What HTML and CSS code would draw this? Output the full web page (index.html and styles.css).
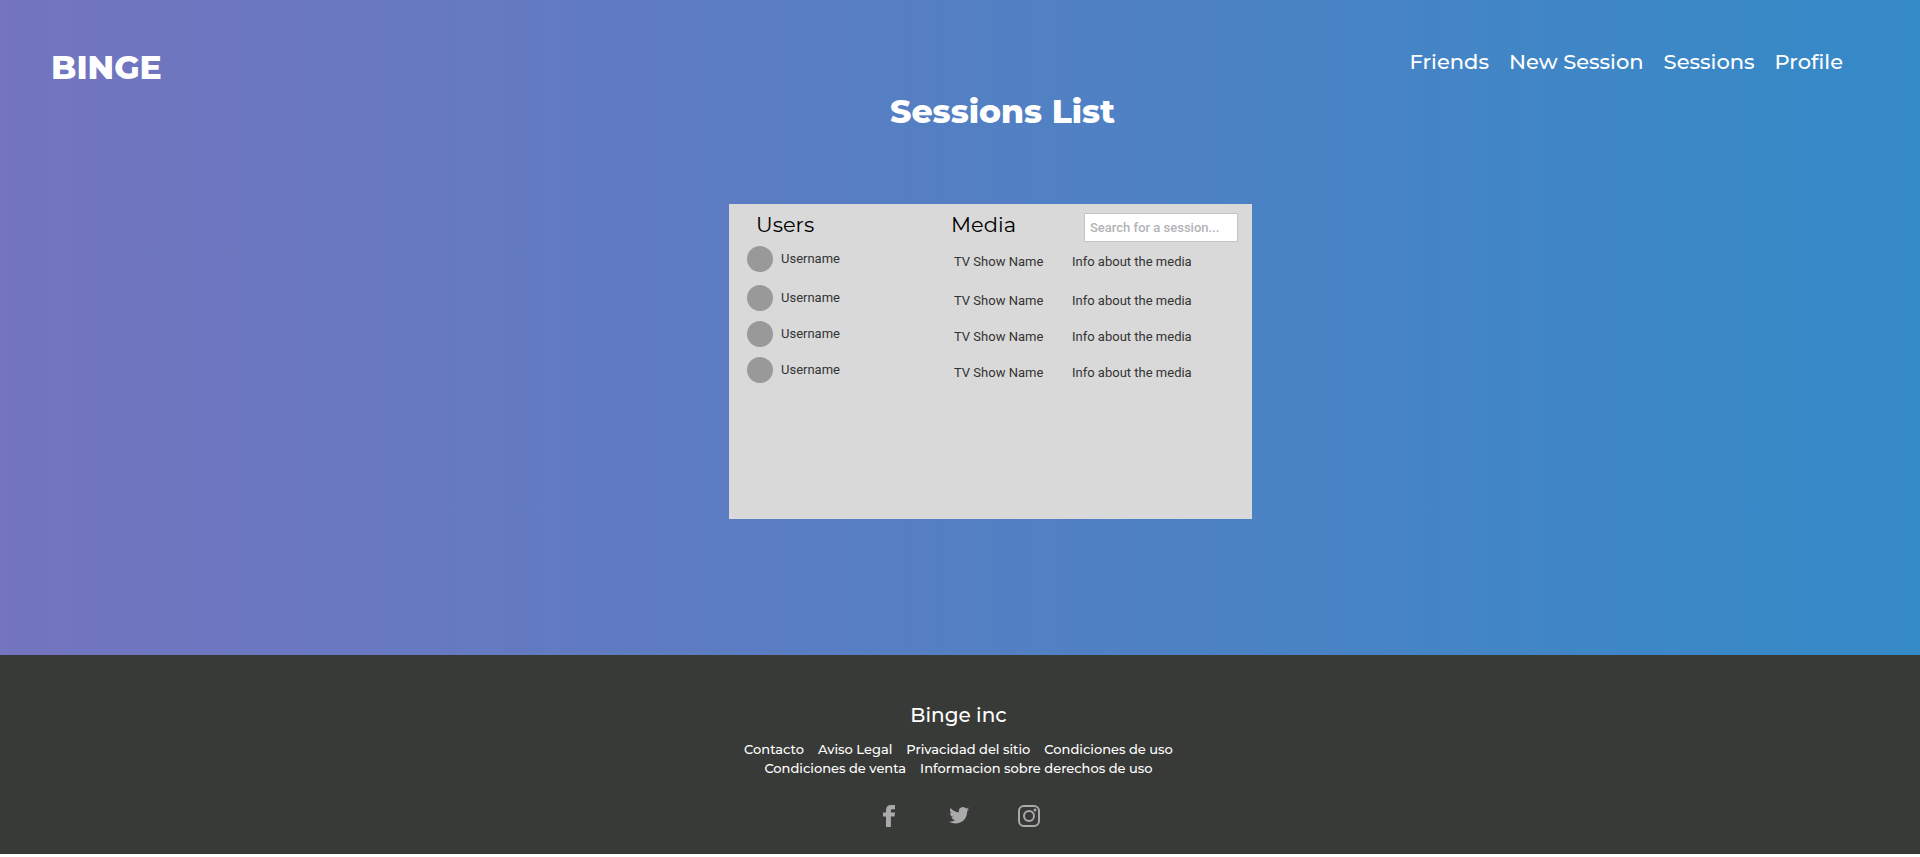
FILE: index.html
```html
<!DOCTYPE html>
<html lang="es">
<head>
<meta charset="utf-8">
<meta name="viewport" content="width=device-width, initial-scale=1">
<title>Binge - Sessions List</title>
<link rel="stylesheet" href="styles.css">
</head>
<body>
<div class="hero">
  <header class="topbar">
    <a class="brand" href="#">BINGE</a>
    <nav class="nav">
      <a href="#">Friends</a>
      <a href="#">New Session</a>
      <a href="#">Sessions</a>
      <a href="#">Profile</a>
    </nav>
  </header>
  <main class="content">
    <h1 class="title">Sessions List</h1>
    <section class="panel">
      <table class="sessions">
        <colgroup><col class="col-user"><col class="col-show"><col class="col-info"></colgroup>
        <thead>
          <tr>
            <th class="head-users" scope="col">Users</th>
            <th scope="col">Media</th>
            <td class="head-search"><input class="search" type="search" aria-label="Search for a session" placeholder="Search for a session..."></td>
          </tr>
        </thead>
        <tbody>
          <tr><td><div class="user"><span class="avatar"></span><span>Username</span></div></td><td class="media show">TV Show Name</td><td class="media">Info about the media</td></tr>
          <tr><td><div class="user"><span class="avatar"></span><span>Username</span></div></td><td class="media show">TV Show Name</td><td class="media">Info about the media</td></tr>
          <tr><td><div class="user"><span class="avatar"></span><span>Username</span></div></td><td class="media show">TV Show Name</td><td class="media">Info about the media</td></tr>
          <tr><td><div class="user"><span class="avatar"></span><span>Username</span></div></td><td class="media show">TV Show Name</td><td class="media">Info about the media</td></tr>
        </tbody>
      </table>
    </section>
  </main>
</div>
<footer class="footer">
  <h2 class="company">Binge inc</h2>
  <nav class="links">
    <a href="#">Contacto</a>
    <a href="#">Aviso Legal</a>
    <a href="#">Privacidad del sitio</a>
    <a href="#">Condiciones de uso</a>
    <a href="#">Condiciones de venta</a>
    <a href="#">Informacion sobre derechos de uso</a>
  </nav>
  <div class="social">
    <a href="#" aria-label="Facebook"><svg viewBox="0 0 24 24"><path fill="currentColor" d="M9 23V12.600H6V8.600h3V6.200C9 2.900 10.700 1 14 1h4v4.200h-2.600c-1.200 0-1.500.5-1.500 1.600v1.800H18l-.5 4h-3.600V23z"/></svg></a>
    <a href="#" aria-label="Twitter"><svg viewBox="0 0 24 24"><path fill="currentColor" d="M22.200 5.200c-.7.300-1.500.5-2.300.6.800-.5 1.500-1.300 1.800-2.200-.8.500-1.700.8-2.600 1A4.100 4.100 0 0 0 12 8.300C8.600 8.200 5.600 6.500 3.600 4c-1.100 1.900-.6 4.300 1.200 5.500-.6 0-1.300-.2-1.800-.5 0 2 1.400 3.700 3.300 4.100-.6.200-1.200.2-1.900.1.500 1.600 2 2.800 3.800 2.800A8.300 8.300 0 0 1 2.200 17.700c5.700 3.600 16.500 2 17.900-8.700V7.300c.8-.6 1.500-1.300 2.100-2.100z"/></svg></a>
    <a href="#" aria-label="Instagram"><svg viewBox="0 0 24 24"><g fill="none" stroke="currentColor" stroke-width="2"><rect x="2" y="2" width="20" height="20" rx="5"/><circle cx="12" cy="12" r="5"/></g><circle cx="18" cy="6" r="1.500" fill="currentColor"/></svg></a>
  </div>
</footer>
</body>
</html>
```
FILE: styles.css
```css
* { box-sizing: border-box; }

body {
  margin: 0;
  background: #fff;
  font-family: Montserrat, Inter, sans-serif;
}

a { color: inherit; text-decoration: none; }

.hero {
  padding-bottom: 136px;
  background: linear-gradient(to right, #7474bf, #348ac7);
  color: #fff;
}

.topbar {
  display: flex;
  justify-content: space-between;
  align-items: flex-start;
  padding: 46px 77px 0 51px;
}

.brand {
  font-size: 33px;
  font-weight: 800;
  line-height: 42px;
}

.nav {
  display: flex;
  gap: 20px;
  font-size: 21px;
  font-weight: 500;
  line-height: 32px;
}

.content {
  display: flex;
  flex-direction: column;
  align-items: center;
  padding-left: 61px;
}

.title {
  margin: 2px 0 0;
  padding-left: 24px;
  font-size: 33px;
  font-weight: 800;
  line-height: 42px;
}

.panel {
  width: 523px;
  max-width: 100%;
  min-height: 315px;
  margin-top: 72px;
  padding: 9px 14px 0 18px;
  background: #d9d9d9;
  color: #333;
  font-family: Roboto, sans-serif;
  font-size: 13px;
}

.sessions {
  width: 100%;
  table-layout: fixed;
  border-collapse: collapse;
}

.col-user { width: 204px; }
.col-show { width: 121px; }

.sessions th,
.sessions td {
  padding: 0;
  text-align: left;
  vertical-align: top;
}

.sessions th {
  color: #000;
  font-family: Montserrat, Inter, sans-serif;
  font-size: 21px;
  font-weight: 400;
  line-height: 24px;
}

.sessions .head-users { padding-left: 9px; }
.sessions .head-search { text-align: right; }

.search {
  display: inline-block;
  width: 154px;
  height: 29px;
  padding: 0 5px;
  border: 1px solid #c4c4c4;
  border-radius: 0;
  background: #fff;
  color: #333;
  font: 500 13px Roboto, sans-serif;
  vertical-align: top;
  appearance: none;
}

.search::placeholder { color: #b4b4b4; opacity: 1; }

.sessions tbody td { padding: 5px 0; }
.sessions tbody tr:first-child td { padding: 4px 0 8px; }

.user {
  display: flex;
  gap: 8px;
  line-height: 26px;
}

.avatar {
  width: 26px;
  height: 26px;
  border-radius: 50%;
  background: #999;
}

.sessions .media { line-height: 30px; }
.sessions tbody .media { padding: 6px 0 0; }
.sessions tbody tr:first-child .media { padding: 5px 0 0; }
.sessions .show { text-indent: 3px; }

.footer {
  display: flex;
  flex-direction: column;
  align-items: center;
  padding: 45px 27px 26px 24px;
  margin-bottom: 3px;
  background: #383a38;
  color: #fff;
}

.company {
  margin: 0;
  font-size: 20px;
  font-weight: 500;
  line-height: 30px;
}

.links {
  display: flex;
  flex-wrap: wrap;
  justify-content: center;
  column-gap: 14px;
  max-width: 450px;
  margin-top: 10px;
  font-size: 13px;
  font-weight: 500;
  line-height: 19px;
}

.social {
  display: flex;
  gap: 46px;
  margin-top: 26px;
  color: #aaa;
}

.social a, .social svg {
  display: block;
  width: 24px;
  height: 24px;
}
```
